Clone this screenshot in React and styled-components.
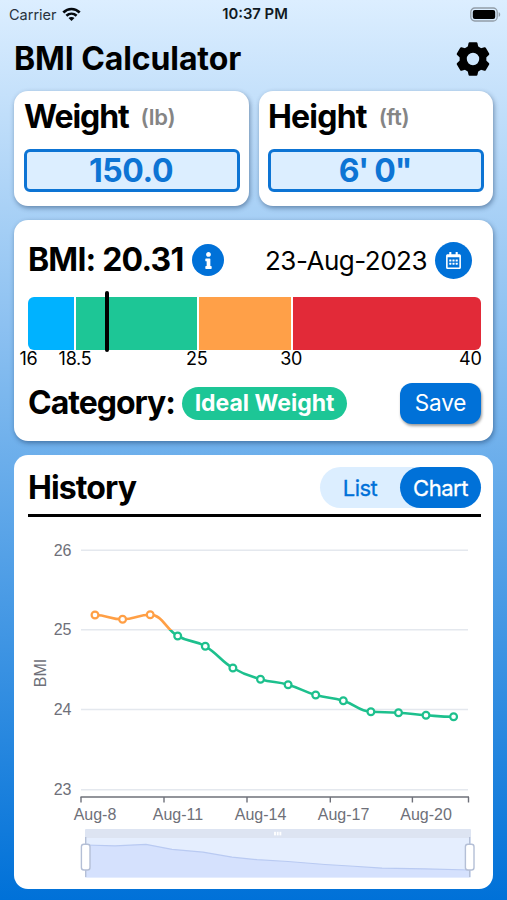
import React, { useState } from 'react';
import styled, { createGlobalStyle } from 'styled-components';
import { FaInfo, FaRegCalendarAlt } from 'react-icons/fa';

const GlobalStyle = createGlobalStyle`
  * {
    box-sizing: border-box;
  }

  body {
    margin: 0;
    font-family: Inter, 'Liberation Sans', sans-serif;
    color: #000;
  }

  button {
    font-family: inherit;
    border: none;
    padding: 0;
    cursor: pointer;
  }
`;

const Screen = styled.div`
  width: 507px;
  height: 900px;
  overflow: hidden;
  display: flex;
  flex-direction: column;
  background: linear-gradient(#dceeff, #0071d8);
`;

const StatusBar = styled.div`
  display: grid;
  grid-template-columns: 1fr auto 1fr;
  align-items: center;
  height: 28px;
  padding: 0 6px 0 9px;
  font-size: 14.5px;
`;

const Carrier = styled.div`
  display: flex;
  align-items: center;
  gap: 5px;
  color: #27323c;
`;

const Clock = styled.div`
  font-size: 14.8px;
  font-weight: 600;
  color: #111a22;
`;

const Battery = styled.svg`
  justify-self: end;
`;

const Header = styled.header`
  display: flex;
  justify-content: space-between;
  align-items: center;
  height: 61px;
  padding: 0 17px 0 14px;
`;

const Title = styled.h1`
  margin: 0;
  font-size: 32px;
  font-weight: 700;
  line-height: 40px;
  white-space: nowrap;
  letter-spacing: ${({ $spacing }) => $spacing || '-1px'};
`;

const Content = styled.main`
  display: flex;
  flex-direction: column;
  gap: 14px;
  padding: 2px 14px 0;
`;

const Card = styled.section`
  background: #fff;
  border-radius: 14px;
  box-shadow: 1px 2px 5px rgba(10, 40, 80, 0.45);
`;

const InputRow = styled.div`
  display: grid;
  grid-template-columns: 235px 234px;
  gap: 10px;
`;

const InputCard = styled(Card)`
  height: 115px;
  padding: 6px 9px 0 ${({ $left }) => $left}px;
`;

const InputLabel = styled.div`
  display: flex;
  align-items: center;
  gap: 12px;
  height: 40px;
`;

const Unit = styled.span`
  font-size: 22px;
  font-weight: 600;
  letter-spacing: -0.3px;
  color: #858585;
`;

const ValueBox = styled.div`
  height: 43px;
  margin-top: 12px;
  border: 3px solid #0d74d4;
  border-radius: 6px;
  background: #dceeff;
  color: #0d74d4;
  font-size: 32px;
  font-weight: 700;
  line-height: 37px;
  letter-spacing: ${({ $spacing }) => $spacing};
  text-align: center;
  text-indent: -2px;
`;

const ResultCard = styled(Card)`
  height: 221px;
  padding: 20px 12px 0 14px;
`;

const Row = styled.div`
  display: flex;
  align-items: center;
  height: 40px;
`;

const DateText = styled.span`
  margin-left: auto;
  font-size: 26px;
  letter-spacing: -0.5px;
`;

const RoundButton = styled.button`
  display: flex;
  align-items: center;
  justify-content: center;
  width: ${({ $size }) => $size}px;
  height: ${({ $size }) => $size}px;
  margin: ${({ $margin }) => $margin};
  border-radius: 50%;
  background: #0071d8;
  color: #fff;
`;

const Scale = styled.div`
  position: relative;
  margin-top: 16.5px;
`;

const Segments = styled.div`
  display: grid;
  grid-template-columns: 46px 120.5px 92px 1fr;
  gap: 2.3px;
  height: 53px;
  border-radius: 6px;
  overflow: hidden;
`;

const Segment = styled.div`
  background: ${({ $color }) => $color};
`;

// Marks the current BMI on top of the colored ranges
const Marker = styled.div`
  position: absolute;
  top: -6px;
  left: 76.5px;
  width: 4px;
  height: 61px;
  border-radius: 2px;
  background: #000;
`;

const ScaleLabels = styled.div`
  display: grid;
  grid-template-columns: 46px 122px 94.5px 1fr auto;
  height: 18px;
  font-size: 18px;
  line-height: 18px;
  letter-spacing: -0.3px;
`;

const ScaleLabel = styled.span`
  justify-self: start;
  transform: translateX(${({ $last }) => ($last ? '0.5px' : '-47%')});
`;

const CategoryRow = styled(Row)`
  margin-top: 15.5px;
`;

const Pill = styled.span`
  height: 33px;
  width: 165px;
  margin-left: 7px;
  border-radius: 17px;
  background: #1dc696;
  color: #fff;
  font-size: 23px;
  font-weight: 700;
  line-height: 33px;
  text-align: center;
`;

const SaveButton = styled.button`
  width: 81px;
  height: 41px;
  margin-left: auto;
  border-radius: 12px;
  background: #0071d8;
  color: #fff;
  font-size: 22.5px;
  line-height: 40px;
  letter-spacing: -0.1px;
  box-shadow: 1px 2px 3px rgba(0, 0, 0, 0.4);
`;

const HistoryCard = styled(Card)`
  height: 434px;
  padding-top: 12px;
  box-shadow: none;
`;

const HistoryHeader = styled.div`
  display: flex;
  align-items: center;
  justify-content: space-between;
  height: 50px;
  margin: 0 12px 0 14px;
  padding-bottom: 6px;
  border-bottom: 3px solid #000;
`;

const Toggle = styled.div`
  display: flex;
  width: 161px;
  height: 41px;
  border-radius: 21px;
  background: #dceeff;
`;

const ToggleOption = styled.button`
  width: ${({ $active }) => ($active ? 81 : 80)}px;
  height: 41px;
  border-radius: 21px;
  font-size: 22px;
  line-height: 40px;
  letter-spacing: -0.5px;
  -webkit-text-stroke: 0.3px currentColor;
  background: ${({ $active }) => ($active ? '#0071d8' : 'transparent')};
  color: ${({ $active }) => ($active ? '#fff' : '#0071d8')};
`;

const ChartSvg = styled.svg`
  display: block;
  font-family: 'Liberation Sans', Arial, sans-serif;
  font-size: 16px;
  fill: #6e7079;
`;

const points = [
  [95, 615], [122.6, 619.3], [150.2, 614.8], [177.7, 636],
  [205.3, 646.3], [232.9, 668], [260.5, 679.2], [288.1, 684.7],
  [315.7, 695], [343.3, 700.7], [370.9, 711.8], [398.5, 712.7],
  [426, 715.2], [453.6, 716.7],
];

const yTicks = [[26, 550.3], [25, 629.8], [24, 709.5], [23, 789.7]];
const xTicks = [81, 164, 247, 330.3, 412.4, 468.5];
const xLabels = [['Aug-8', 95], ['Aug-11', 178], ['Aug-14', 260.5], ['Aug-17', 343.5], ['Aug-20', 426]];

// Smooth curve that stays level at local peaks
const smoothPath = (pts) => {
  const slope = pts.map((p, i) => {
    if (i === 0 || i === pts.length - 1) return 0;
    const before = (p[1] - pts[i - 1][1]) / (p[0] - pts[i - 1][0]);
    const after = (pts[i + 1][1] - p[1]) / (pts[i + 1][0] - p[0]);
    if (before * after <= 0) return 0;
    const avg = (before + after) / 2;
    return Math.sign(avg) * Math.min(Math.abs(avg), 2 * Math.abs(before), 2 * Math.abs(after));
  });
  return pts.slice(1).reduce((d, p, i) => {
    const prev = pts[i];
    const h = (p[0] - prev[0]) * 0.45;
    return `${d} C${prev[0] + h} ${prev[1] + slope[i] * h} ${p[0] - h} ${p[1] - slope[i + 1] * h} ${p[0]} ${p[1]}`;
  }, `M${pts[0][0]} ${pts[0][1]}`);
};

const overview = 'M85.5 845 L115 845.8 L146 844.3 L172 849.3 L203 852.2 L232 857.2 L257 859.7 L288 861.5 L325 864.5 L350 866 L382 868.2 L425 868.8 L470 870';

const GearIcon = () => (
  <svg width="34" height="34" viewBox="-17 -17 34 34">
    <circle r="9.8" fill="none" stroke="#000" strokeWidth="7.2" />
    {[0, 60, 120, 180, 240, 300].map((angle) => (
      <path
        key={angle}
        transform={`rotate(${angle})`}
        d="M-5.4 -11.5 L-4.5 -15.7 Q-4.3 -16.7 -3.4 -16.7 H3.4 Q4.3 -16.7 4.5 -15.7 L5.4 -11.5 Z"
      />
    ))}
  </svg>
);

const HistoryChart = () => (
  <ChartSvg width="479" height="372" viewBox="14 517 479 372">
    <defs>
      <linearGradient id="bmiLine" gradientUnits="userSpaceOnUse" x1="0" y1="550" x2="0" y2="790">
        <stop offset="0.333" stopColor="#ff9f45" />
        <stop offset="0.333" stopColor="#1dc08d" />
      </linearGradient>
    </defs>

    {yTicks.map(([value, y]) => (
      <g key={value}>
        <line x1="81" x2="468" y1={y} y2={y} stroke="#e4e8ee" strokeWidth="1.4" />
        <text x="71.5" y={y + 5.5} textAnchor="end">{value}</text>
      </g>
    ))}
    <text transform="translate(46 673) rotate(-90)" textAnchor="middle">BMI</text>

    <line x1="80.5" x2="469" y1="797" y2="797" stroke="#6e7079" strokeWidth="1.4" />
    {xTicks.map((x) => (
      <line key={x} x1={x} x2={x} y1="797" y2="802.5" stroke="#6e7079" strokeWidth="1.4" />
    ))}
    {xLabels.map(([label, x]) => (
      <text key={label} x={x} y="820" textAnchor="middle">{label}</text>
    ))}

    <path d={smoothPath(points)} fill="none" stroke="url(#bmiLine)" strokeWidth="2.6" />
    {points.map(([x, y]) => (
      <circle key={x} cx={x} cy={y} r="3.4" fill="#fff" stroke={y < 630 ? '#ff9f45' : '#1dc08d'} strokeWidth="2.2" />
    ))}

    {/* Range slider */}
    <rect x="85" y="829" width="386" height="9" rx="1" fill="#dde4f2" />
    <rect x="85" y="838" width="386" height="39.5" fill="#e5eefe" />
    <path d={`${overview} V877.5 H85.5 Z`} fill="#d5e1fd" />
    <path d={overview} fill="none" stroke="#b9caf2" strokeWidth="1.2" />
    {[275, 277.7, 280.4].map((x) => (
      <rect key={x} x={x - 0.9} y="831.8" width="1.8" height="3.6" fill="#fff" />
    ))}
    {[85.7, 469.7].map((x) => (
      <g key={x} stroke="#b4bfd6" strokeWidth="1.4">
        <line x1={x} x2={x} y1="837" y2="877" />
        <rect x={x - 4.3} y="844.3" width="8.6" height="25.7" rx="2.5" fill="#fff" />
      </g>
    ))}
  </ChartSvg>
);

const App = () => {
  const [view, setView] = useState('Chart');

  return (
    <>
      <GlobalStyle />
      <Screen>
        <StatusBar>
          <Carrier>
            Carrier
            <svg width="19" height="15" viewBox="0 0 19 15" fill="none" stroke="#05090d" strokeWidth="2.6">
              <path d="M1.3 5.5C6 .8 13 .8 17.7 5.5" />
              <path d="M4.4 8.8C7.4 6 11.6 6 14.6 8.8" />
              <path d="M9.5 14 L6.5 11 C8 9.7 11 9.7 12.5 11 Z" fill="#05090d" stroke="none" />
            </svg>
          </Carrier>
          <Clock>10:37 PM</Clock>
          <Battery width="31" height="15" viewBox="0 0 31 15">
            <rect x="0.8" y="1" width="26.4" height="13" rx="4" fill="none" stroke="#929da8" strokeWidth="1.3" />
            <rect x="2.8" y="3" width="22.4" height="9" rx="2" fill="#000" />
            <path d="M28.7 5.2c2 .7 2 3.9 0 4.6z" fill="#929da8" />
          </Battery>
        </StatusBar>

        <Header>
          <Title $spacing="-0.1px">BMI Calculator</Title>
          <GearIcon />
        </Header>

        <Content>
          <InputRow>
            <InputCard $left={10}>
              <InputLabel>
                <Title as="h2" $spacing="-1.1px">Weight</Title>
                <Unit>(lb)</Unit>
              </InputLabel>
              <ValueBox $spacing="-0.4px">150.0</ValueBox>
            </InputCard>
            <InputCard $left={9}>
              <InputLabel>
                <Title as="h2" $spacing="-0.8px">Height</Title>
                <Unit>(ft)</Unit>
              </InputLabel>
              <ValueBox $spacing="-1.2px">6' 0"</ValueBox>
            </InputCard>
          </InputRow>

          <ResultCard>
            <Row>
              <Title as="h2" $spacing="-0.8px">BMI: 20.31</Title>
              <RoundButton $size={32} $margin="0 0 0 9px"><FaInfo size={17} /></RoundButton>
              <DateText>23-Aug-2023</DateText>
              <RoundButton $size={37} $margin="0 9px 0 8px"><FaRegCalendarAlt size={17} /></RoundButton>
            </Row>

            <Scale>
              <Segments>
                <Segment $color="#00b2ff" />
                <Segment $color="#1dc696" />
                <Segment $color="#ffa048" />
                <Segment $color="#e22a38" />
              </Segments>
              <Marker />
              <ScaleLabels>
                <ScaleLabel>16</ScaleLabel>
                <ScaleLabel>18.5</ScaleLabel>
                <ScaleLabel>25</ScaleLabel>
                <ScaleLabel>30</ScaleLabel>
                <ScaleLabel $last>40</ScaleLabel>
              </ScaleLabels>
            </Scale>

            <CategoryRow>
              <Title as="h2">Category:</Title>
              <Pill>Ideal Weight</Pill>
              <SaveButton>Save</SaveButton>
            </CategoryRow>
          </ResultCard>

          <HistoryCard>
            <HistoryHeader>
              <Title as="h2" $spacing="-0.9px">History</Title>
              <Toggle>
                {['List', 'Chart'].map((name) => (
                  <ToggleOption key={name} $active={view === name} onClick={() => setView(name)}>
                    {name}
                  </ToggleOption>
                ))}
              </Toggle>
            </HistoryHeader>
            <HistoryChart />
          </HistoryCard>
        </Content>
      </Screen>
    </>
  );
};

export default App;
